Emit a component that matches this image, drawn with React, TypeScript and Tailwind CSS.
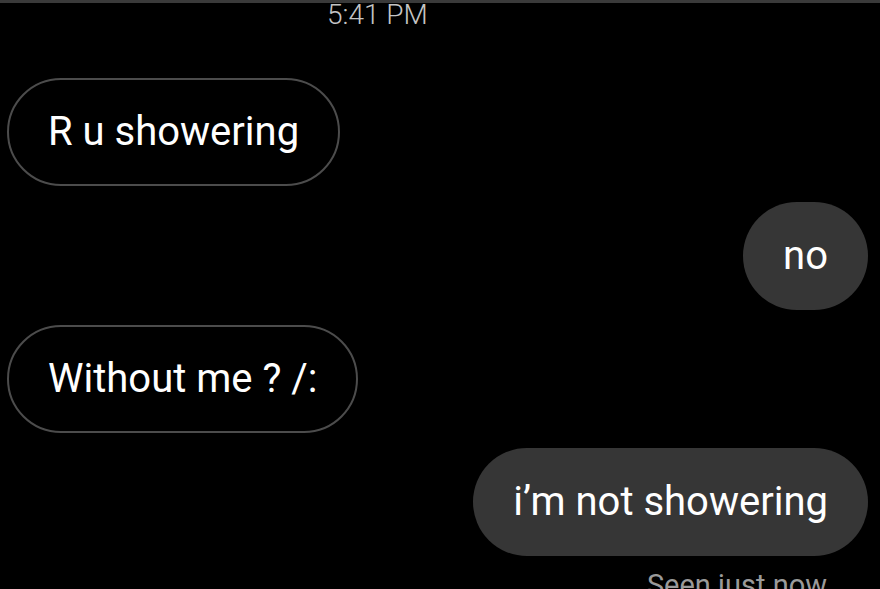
import React from 'react';

const Incoming: React.FC<{ text: string }> = ({ text }) => (
  <div className="flex">
    <div className="h-[108px] flex items-center rounded-full border-2 border-[#4c4c4c] pl-[39px] pr-[39px] text-white">
      {text}
    </div>
  </div>
);

const Outgoing: React.FC<{ text: string }> = ({ text }) => (
  <div className="flex justify-end">
    <div className="h-[108px] flex items-center rounded-full bg-[#363636] px-[40px] text-white">
      {text}
    </div>
  </div>
);

const App: React.FC = () => {
  return (
    <div
      className="w-[880px] h-[589px] overflow-hidden bg-black border-t-[3px] border-[#3a3a3a]"
      style={{ fontFamily: 'Roboto, "Noto Sans", sans-serif' }}
    >
      <div className="pl-[327px] h-[75px] text-[28px] leading-[24px] text-[#c4c4c4] font-light">
        5:41 PM
      </div>
      <div className="pl-[7px] pr-3 text-[40px] flex flex-col">
        <Incoming text="R u showering" />
        <div className="mt-[16px]">
          <Outgoing text="no" />
        </div>
        <div className="mt-[15px]">
          <Incoming text="Without me ? /:" />
        </div>
        <div className="mt-[15px]">
          <Outgoing text="i’m not showering" />
        </div>
        <div className="mt-[14px] pr-[41px] text-right text-[29px] leading-[30px] text-[#9a9a9a]">Seen just now</div>
      </div>
    </div>
  );
};

export default App;
